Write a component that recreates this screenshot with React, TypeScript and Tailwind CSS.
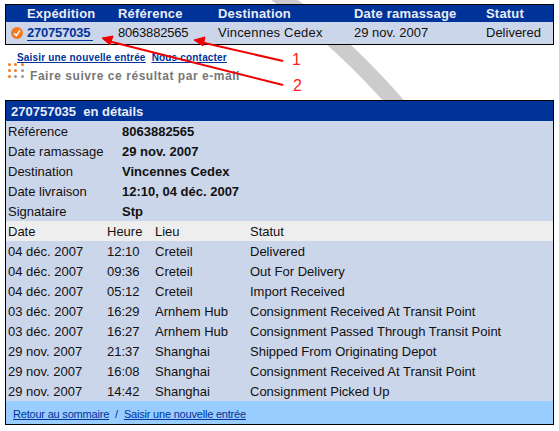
const summaryColumns = [
  { label: 'Expédition', width: 'w-[91px]' },
  { label: 'Référence', width: 'w-[100px]' },
  { label: 'Destination', width: 'w-[136px]' },
  { label: 'Date ramassage', width: 'w-[132px]' },
  { label: 'Statut', width: 'flex-1' },
]

const details = [
  { label: 'Référence', value: '8063882565' },
  { label: 'Date ramassage', value: '29 nov. 2007' },
  { label: 'Destination', value: 'Vincennes Cedex' },
  { label: 'Date livraison', value: '12:10, 04 déc. 2007' },
  { label: 'Signataire', value: 'Stp' },
]

const events = [
  { date: '04 déc. 2007', time: '12:10', place: 'Creteil', status: 'Delivered' },
  { date: '04 déc. 2007', time: '09:36', place: 'Creteil', status: 'Out For Delivery' },
  { date: '04 déc. 2007', time: '05:12', place: 'Creteil', status: 'Import Received' },
  { date: '03 déc. 2007', time: '16:29', place: 'Arnhem Hub', status: 'Consignment Received At Transit Point' },
  { date: '03 déc. 2007', time: '16:27', place: 'Arnhem Hub', status: 'Consignment Passed Through Transit Point' },
  { date: '29 nov. 2007', time: '21:37', place: 'Shanghai', status: 'Shipped From Originating Depot' },
  { date: '29 nov. 2007', time: '16:08', place: 'Shanghai', status: 'Consignment Received At Transit Point' },
  { date: '29 nov. 2007', time: '14:42', place: 'Shanghai', status: 'Consignment Picked Up' },
]

function EventRow({ date, time, place, status }: { date: string; time: string; place: string; status: string }) {
  return (
    <div className="flex h-5 items-center pl-[2px] pt-[2px] text-[13px] text-[#111]">
      <span className="w-[99px]">{date}</span>
      <span className="w-[48px]">{time}</span>
      <span className="w-[95px]">{place}</span>
      <span>{status}</span>
    </div>
  )
}

function DotGrid() {
  const colors = ['#f47a1f', '#f47a1f', '#f47a1f', '#f47a1f', '#f47a1f', '#999999', '#f47a1f', '#999999', '#999999']
  return (
    <div className="mb-[11px] grid w-[16px] grid-cols-3 gap-x-[3px] gap-y-[3px]">
      {colors.map((color, i) => (
        <span key={i} className="size-[3px] rounded-full" style={{ backgroundColor: color }} />
      ))}
    </div>
  )
}

export default function App() {
  return (
    <div className="relative h-[431px] w-[559px] overflow-hidden bg-white font-['Liberation_Sans',Arial,sans-serif]">
      {/* filigrane gris derrière le contenu */}
      <svg className="absolute left-0 top-0" width="559" height="431" viewBox="0 0 559 431" fill="none">
        <path d="M 268 -12 Q 340 38 400 108" stroke="#cccccc" strokeWidth="16" />
      </svg>

      <div className="relative px-[5px] pt-1">
        <div className="border border-black">
          <div className="flex h-[17px] items-center bg-[#003399] pl-[21px] text-[13px] font-bold tracking-[0.2px] text-[#e8edf7]">
            {summaryColumns.map(col => (
              <span key={col.label} className={col.width}>{col.label}</span>
            ))}
          </div>
          <div className="flex h-[22px] items-center bg-[#ccd6ea] text-[13px] text-[#111]">
            <svg className="ml-[5px] mr-[4px]" width="12" height="12" viewBox="0 0 12 12">
              <circle cx="6" cy="6" r="6" fill="#f47a1f" />
              <path d="M3 6.2 L5.2 8.6 L9 3.4" stroke="#fff" strokeWidth="1.6" fill="none" />
            </svg>
            <span className="w-[91px]">
              <a className="border-b border-[#003399] pr-[3px] font-bold tracking-[-0.2px] text-[#003399]">270757035</a>
            </span>
            <span className="w-[100px] tracking-[-0.2px]">8063882565</span>
            <span className="w-[136px] tracking-[0.2px]">Vincennes Cedex</span>
            <span className="w-[132px]">29 nov. 2007</span>
            <span>Delivered</span>
          </div>
        </div>

        <div className="mt-[5px] flex h-[14px] items-center gap-[6px] pl-[12px] text-[10px] font-bold tracking-[0.18px] text-[#003399] underline">
          <a>Saisir une nouvelle entrée</a>
          <a>Nous contacter</a>
        </div>
        <div className="mt-[3px] flex h-[17px] items-center gap-[6px] pl-[3px] text-[12px] font-bold tracking-[0.55px] text-[#777]">
          <DotGrid />
          <span>Faire suivre ce résultat par e-mail</span>
        </div>

        <div className="mt-[16px] border border-black bg-[#ccd6ea]">
          <div className="flex h-[20px] items-center bg-[#003399] pl-[5px] pt-[2px] text-[13px] font-bold text-[#e8edf7]">
            270757035&nbsp; en détails
          </div>
          {details.map(row => (
            <div key={row.label} className="flex h-5 items-center pl-[2px] pt-[2px] text-[13px] text-[#111]">
              <span className="w-[114px]">{row.label}</span>
              <span className="font-bold">{row.value}</span>
            </div>
          ))}
          <div className="flex h-5 items-center bg-[#eeeeee] pl-[2px] pt-[2px] text-[13px] text-[#111]">
            <span className="w-[99px]">Date</span>
            <span className="w-[48px]">Heure</span>
            <span className="w-[95px]">Lieu</span>
            <span>Statut</span>
          </div>
          {events.map(event => (
            <EventRow key={event.date + event.time} {...event} />
          ))}
          <div className="flex h-[23px] items-center gap-[6px] bg-[#99ccff] pl-[7px] pt-[3px] text-[11px] tracking-[-0.2px] text-[#003399]">
            <a className="underline">Retour au sommaire</a>
            <span>/</span>
            <a className="underline">Saisir une nouvelle entrée</a>
          </div>
        </div>
      </div>

      {/* flèches d'annotation */}
      <svg className="absolute left-0 top-0" width="559" height="431" viewBox="0 0 559 431" fill="none">
        <path d="M 283 61 L 200 42" stroke="#f00000" strokeWidth="2" />
        <path d="M 194 40 L 205 37 L 203 46 Z" fill="#f00000" stroke="#f00000" />
        <path d="M 283 85 L 108 41" stroke="#f00000" strokeWidth="2" />
        <path d="M 102 38 L 113 36 L 110 45 Z" fill="#f00000" stroke="#f00000" />
        <text x="292" y="65" fontSize="16" fill="#ff2020" fontFamily="Liberation Sans">1</text>
        <text x="293" y="91" fontSize="16" fill="#ff2020" fontFamily="Liberation Sans">2</text>
      </svg>
    </div>
  )
}
